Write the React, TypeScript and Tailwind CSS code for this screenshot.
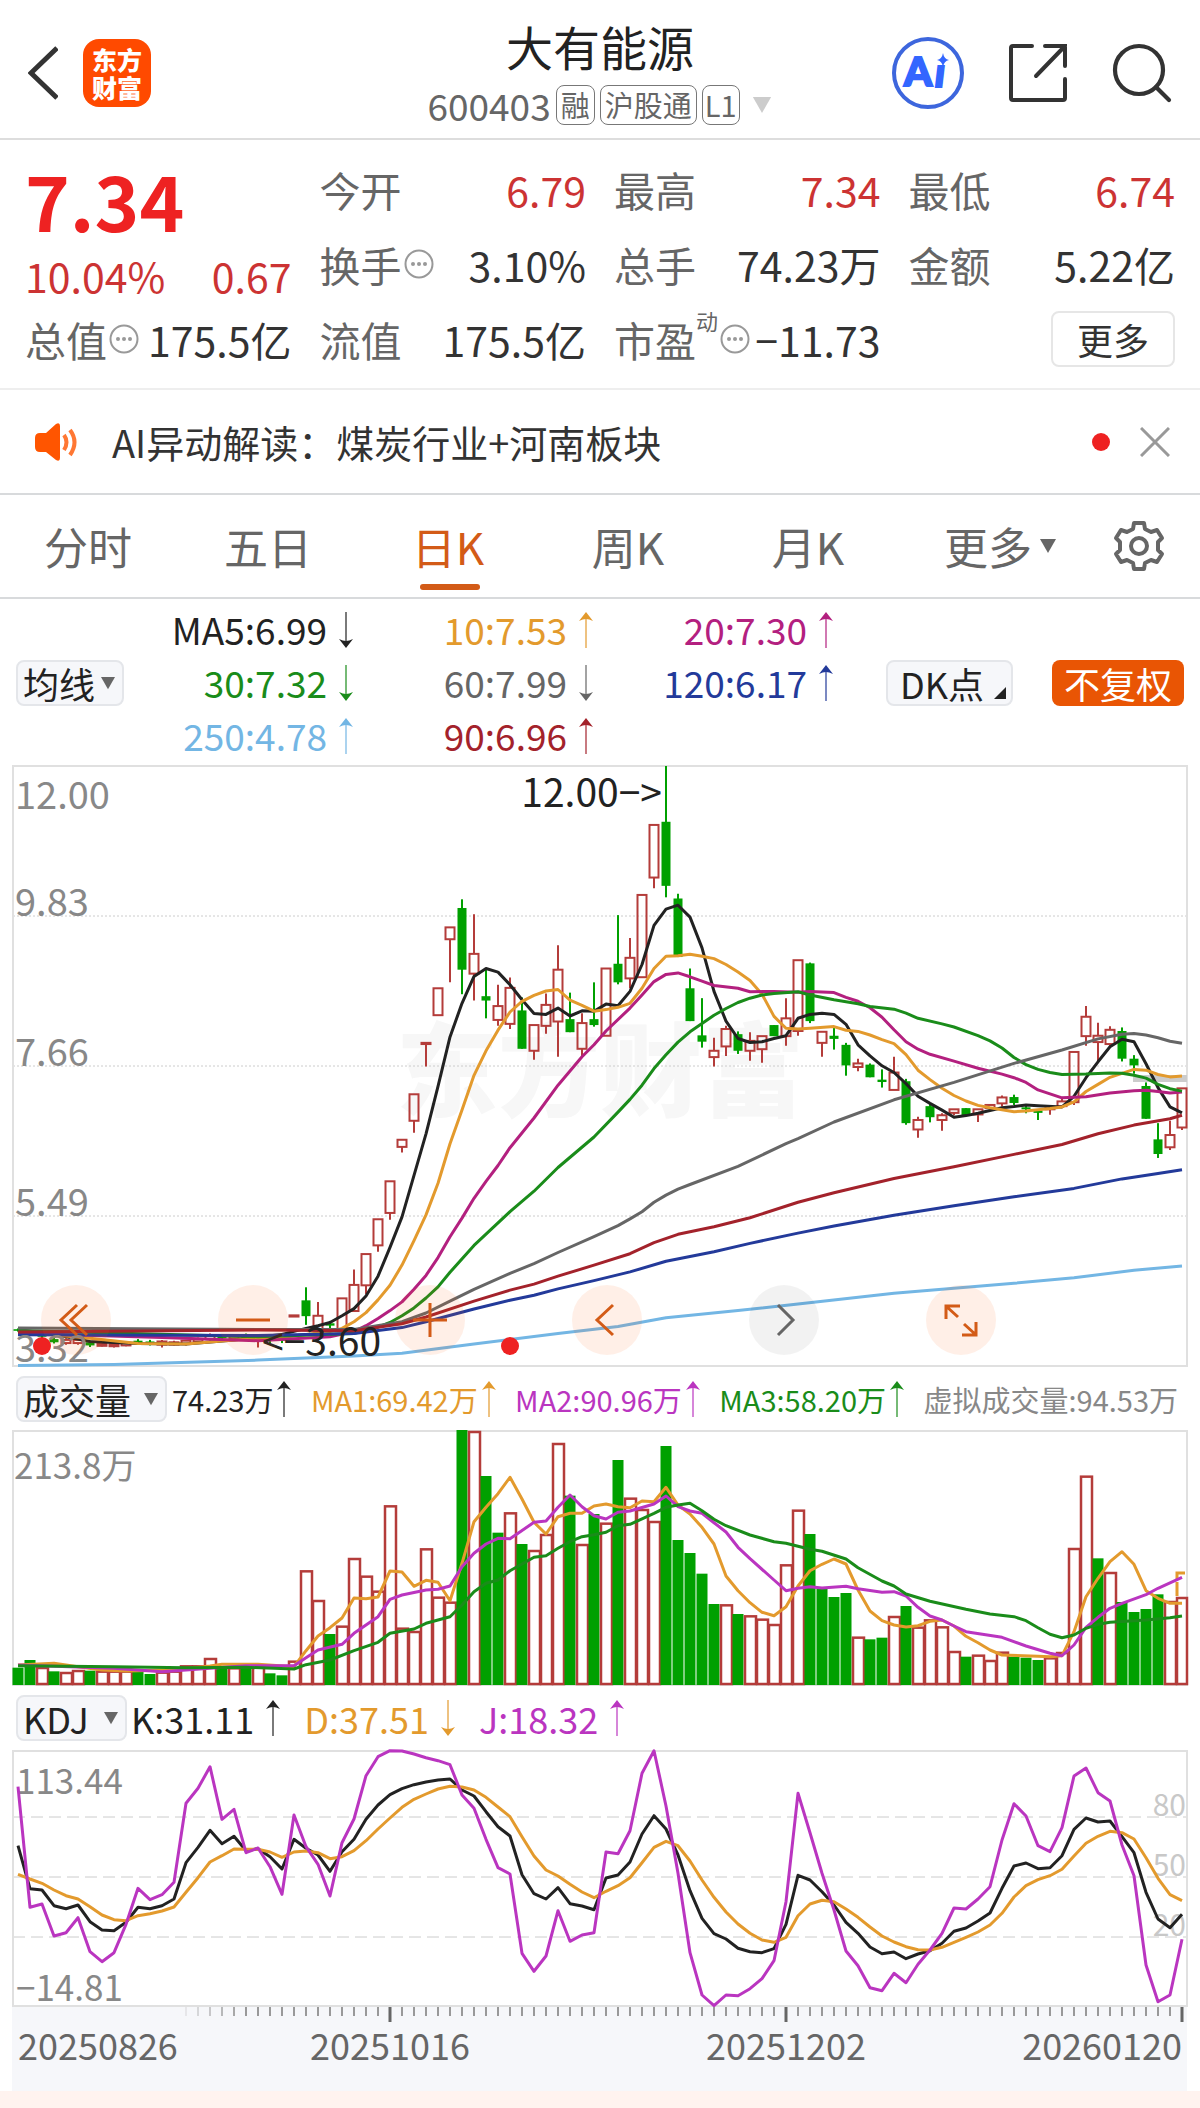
import { Search } from "lucide-react";
import { useState } from "react";
import type { ReactNode } from "react";

type Point = [number, number];
// kind, body top, body bottom, high, low
type Candle = ["r" | "g", number, number, number, number];
type Bar = ["r" | "g", number];

const UP = "#b43c3a";
const DOWN = "#00a000";

const xAt = (i: number) => 18 + 12 * i;
// raw readings of the three panels are scaled into their own view boxes
const priceY = (v: number) => ((v - 15) * 600) / 1517;
const volumeY = (v: number) => (v - 210) / 3;
const kdjY = (v: number) => (v - 60) / 3;

const CANDLES: Candle[] = [
	["g", 1439, 1443, 1437, 1445],
	["r", 1446, 1452, 1444, 1456],
	["g", 1450, 1458, 1448, 1462],
	["g", 1464, 1472, 1460, 1475],
	["r", 1466, 1474, 1462, 1478],
	["r", 1466, 1474, 1464, 1478],
	["g", 1472, 1480, 1468, 1484],
	["r", 1476, 1481, 1474, 1483],
	["r", 1477, 1482, 1474, 1485],
	["r", 1474, 1480, 1470, 1482],
	["g", 1468, 1476, 1464, 1478],
	["g", 1470, 1476, 1466, 1480],
	["r", 1470, 1478, 1466, 1485],
	["r", 1472, 1478, 1468, 1480],
	["r", 1468, 1476, 1466, 1480],
	["r", 1464, 1470, 1460, 1474],
	["r", 1456, 1464, 1450, 1468],
	["g", 1456, 1462, 1452, 1466],
	["r", 1456, 1462, 1452, 1466],
	["g", 1456, 1462, 1450, 1466],
	["r", 1460, 1468, 1456, 1485],
	["g", 1462, 1468, 1458, 1474],
	["g", 1460, 1468, 1456, 1474],
	["r", 1404, 1407, 1404, 1407],
	["g", 1366, 1406, 1333, 1428],
	["r", 1405, 1440, 1370, 1450],
	["g", 1424, 1430, 1418, 1438],
	["r", 1361, 1440, 1361, 1440],
	["r", 1327, 1393, 1288, 1393],
	["r", 1249, 1328, 1249, 1350],
	["r", 1161, 1227, 1161, 1243],
	["r", 1065, 1145, 1065, 1162],
	["r", 960, 978, 960, 992],
	["r", 845, 912, 845, 942],
	["r", 715, 718, 715, 775],
	["r", 577, 645, 577, 645],
	["r", 423, 453, 423, 562],
	["g", 374, 530, 352, 592],
	["r", 490, 540, 390, 608],
	["g", 597, 608, 530, 653],
	["r", 622, 657, 568, 672],
	["r", 576, 667, 550, 680],
	["g", 633, 730, 600, 730],
	["r", 670, 735, 670, 758],
	["r", 619, 672, 590, 692],
	["r", 530, 661, 468, 750],
	["g", 655, 688, 588, 688],
	["r", 665, 730, 640, 752],
	["g", 655, 670, 562, 674],
	["r", 527, 697, 527, 697],
	["g", 515, 562, 392, 567],
	["r", 500, 552, 450, 577],
	["r", 341, 549, 341, 549],
	["r", 164, 297, 164, 324],
	["g", 156, 318, 15, 347],
	["g", 350, 498, 338, 498],
	["g", 577, 660, 527, 660],
	["g", 696, 712, 602, 727],
	["r", 735, 751, 702, 775],
	["r", 680, 724, 672, 748],
	["g", 693, 735, 686, 743],
	["r", 710, 735, 688, 760],
	["r", 698, 731, 698, 765],
	["g", 670, 698, 670, 698],
	["r", 653, 698, 602, 722],
	["r", 506, 685, 506, 697],
	["g", 514, 660, 512, 665],
	["r", 687, 715, 687, 750],
	["g", 697, 705, 676, 732],
	["g", 720, 772, 715, 798],
	["r", 767, 776, 755, 787],
	["g", 770, 802, 767, 802],
	["g", 808, 814, 782, 828],
	["r", 790, 834, 750, 834],
	["g", 812, 918, 806, 922],
	["r", 910, 934, 902, 955],
	["g", 875, 903, 868, 916],
	["r", 898, 910, 893, 937],
	["r", 883, 892, 883, 898],
	["g", 880, 900, 880, 900],
	["r", 883, 896, 883, 915],
	["r", 872, 880, 872, 880],
	["r", 853, 868, 848, 876],
	["g", 852, 867, 846, 872],
	["g", 878, 883, 872, 893],
	["g", 886, 892, 884, 910],
	["r", 878, 883, 876, 897],
	["r", 863, 875, 855, 880],
	["r", 738, 865, 738, 872],
	["r", 649, 698, 622, 722],
	["r", 697, 713, 664, 765],
	["r", 682, 718, 673, 728],
	["g", 685, 755, 676, 762],
	["g", 755, 772, 746, 793],
	["g", 824, 907, 815, 907],
	["g", 959, 996, 918, 1006],
	["r", 948, 979, 912, 986],
	["r", 830, 929, 830, 935],
];

const MA5: Point[] = [
	[0, 1440], [3, 1452], [6, 1470], [10, 1475], [14, 1476], [18, 1466], [22, 1452], [24, 1437], [25, 1430], [26, 1422],
	[27, 1405], [28, 1387], [29, 1355], [30, 1305], [31, 1232], [32, 1155], [33, 1050], [34, 945], [35, 825], [36, 700],
	[37, 615], [38, 547], [39, 527], [40, 536], [41, 568], [42, 606], [43, 641], [44, 643], [45, 627], [46, 647],
	[47, 634], [48, 635], [49, 617], [50, 621], [51, 585], [52, 517], [53, 418], [54, 377], [55, 367], [56, 397],
	[57, 475], [58, 585], [59, 660], [60, 704], [61, 714], [62, 712], [63, 704], [64, 697], [65, 653], [66, 643],
	[67, 640], [68, 643], [69, 668], [70, 720], [71, 748], [72, 773], [73, 790], [74, 818], [75, 850], [76, 868],
	[77, 885], [78, 903], [79, 899], [80, 893], [81, 886], [82, 879], [83, 876], [84, 872], [85, 874], [87, 877],
	[88, 850], [89, 803], [90, 763], [91, 725], [92, 706], [93, 712], [94, 768], [95, 828], [96, 877], [97, 892],
];

const MA10: Point[] = [
	[0, 1445], [6, 1462], [10, 1475], [14, 1476], [18, 1466], [22, 1460], [26, 1445], [27, 1437], [28, 1420], [29, 1397],
	[30, 1365], [31, 1328], [32, 1277], [33, 1215], [34, 1150], [35, 1070], [36, 970], [37, 885], [38, 797], [39, 735],
	[40, 683], [41, 637], [42, 610], [43, 595], [44, 584], [45, 580], [46, 607], [47, 620], [48, 635], [49, 631],
	[50, 625], [51, 615], [52, 577], [53, 527], [54, 496], [55, 495], [56, 491], [57, 496], [58, 502], [59, 517],
	[60, 536], [61, 557], [62, 592], [63, 648], [64, 678], [65, 680], [66, 678], [68, 674], [69, 683], [70, 686],
	[71, 695], [72, 707], [73, 717], [74, 745], [75, 784], [76, 808], [77, 830], [78, 848], [79, 862], [80, 873],
	[81, 879], [82, 884], [83, 889], [84, 887], [86, 881], [87, 877], [88, 864], [89, 838], [90, 820], [91, 802],
	[92, 792], [93, 782], [94, 784], [95, 795], [96, 801], [97, 799],
];

const MA20: Point[] = [
	[0, 1449], [12, 1460], [20, 1468], [26, 1458], [28, 1445], [29, 1430], [30, 1412], [31, 1392], [32, 1370], [33, 1338],
	[34, 1303], [35, 1258], [36, 1205], [37, 1158], [38, 1108], [39, 1065], [40, 1025], [41, 980], [43, 905], [45, 822],
	[47, 750], [48, 720], [49, 685], [51, 627], [52, 594], [53, 560], [54, 542], [55, 538], [56, 548], [57, 559],
	[58, 570], [60, 577], [61, 586], [63, 585], [65, 587], [66, 585], [68, 588], [69, 600], [70, 610], [71, 626],
	[72, 650], [73, 682], [74, 712], [75, 731], [76, 744], [78, 761], [80, 779], [82, 794], [83, 803], [84, 815],
	[85, 834], [87, 854], [89, 851], [91, 842], [93, 836], [94, 835], [95, 838], [96, 842], [97, 839],
];

const MA30: Point[] = [
	[0, 1442], [20, 1458], [28, 1450], [29, 1441], [30, 1434], [31, 1422], [32, 1405], [33, 1385], [34, 1360], [35, 1332],
	[36, 1295], [38, 1227], [41, 1142], [43, 1090], [45, 1030], [48, 953], [50, 890], [51, 858], [52, 822], [53, 780],
	[54, 745], [55, 713], [56, 687], [58, 645], [59, 628], [60, 613], [61, 602], [62, 594], [63, 590], [65, 586],
	[66, 594], [68, 606], [70, 616], [71, 623], [73, 630], [74, 640], [75, 653], [77, 667], [78, 675], [80, 697],
	[81, 710], [82, 728], [83, 752], [84, 770], [85, 782], [86, 790], [87, 795], [89, 794], [91, 791], [92, 792],
	[93, 797], [94, 804], [95, 820], [96, 831], [97, 837],
];

const MA60: Point[] = [
	[0, 1436], [20, 1440], [28, 1440], [32, 1420], [34, 1398], [36, 1368], [38, 1338], [41, 1298], [43, 1273], [45, 1245],
	[48, 1205], [50, 1177], [51, 1160], [52, 1142], [53, 1118], [54, 1100], [55, 1085], [56, 1073], [60, 1027], [64, 970],
	[65, 957], [68, 915], [73, 859], [78, 815], [83, 767], [87, 733], [90, 705], [92, 693], [93, 691], [94, 695],
	[95, 702], [96, 711], [97, 716],
];

const MA90: Point[] = [
	[0, 1446], [20, 1441], [28, 1443], [32, 1425], [34, 1408], [38, 1368], [41, 1340], [43, 1325], [45, 1305], [48, 1277],
	[51, 1248], [53, 1220], [55, 1199], [58, 1180], [61, 1157], [65, 1118], [68, 1094], [73, 1058], [78, 1028], [83, 997],
	[87, 972], [90, 945], [93, 923], [96, 907], [97, 898],
];

const MA120: Point[] = [
	[0, 1453], [20, 1455], [28, 1450], [32, 1435], [34, 1420], [38, 1388], [41, 1366], [43, 1353], [45, 1337], [48, 1316],
	[51, 1294], [54, 1267], [58, 1243], [61, 1222], [65, 1196], [68, 1178], [73, 1151], [78, 1127], [83, 1104], [88, 1083],
	[92, 1059], [95, 1045], [97, 1036],
];

const MA250: Point[] = [
	[0, 1531], [8, 1528], [20, 1517], [28, 1507], [32, 1500], [38, 1476], [45, 1450], [50, 1432], [54, 1410], [60, 1392],
	[65, 1375], [73, 1348], [83, 1323], [88, 1309], [93, 1290], [97, 1279],
];

const VOLUMES: Bar[] = [
	["g", 923], ["g", 900], ["r", 921], ["g", 934], ["r", 936], ["r", 930], ["g", 932], ["r", 932], ["r", 932], ["r", 932],
	["g", 935], ["g", 942], ["r", 935], ["r", 932], ["r", 916], ["r", 916], ["r", 894], ["g", 920], ["r", 922], ["g", 922],
	["r", 920], ["g", 940], ["g", 946], ["r", 902], ["r", 631], ["r", 720], ["g", 822], ["r", 797], ["r", 594], ["r", 647],
	["r", 692], ["r", 436], ["r", 803], ["r", 813], ["r", 565], ["r", 710], ["r", 725], ["g", 210], ["r", 213], ["g", 348],
	["g", 518], ["r", 457], ["g", 552], ["r", 570], ["r", 522], ["r", 249], ["g", 407], ["r", 552], ["g", 462], ["r", 488],
	["g", 300], ["r", 413], ["r", 447], ["r", 483], ["g", 258], ["g", 540], ["g", 579], ["g", 641], ["g", 732], ["r", 733],
	["g", 762], ["r", 766], ["r", 776], ["r", 792], ["r", 613], ["r", 449], ["g", 522], ["g", 686], ["g", 711], ["g", 699],
	["r", 830], ["g", 838], ["g", 833], ["r", 768], ["g", 738], ["r", 800], ["r", 778], ["r", 799], ["r", 873], ["g", 890],
	["r", 884], ["r", 900], ["r", 875], ["g", 890], ["g", 893], ["g", 900], ["r", 892], ["r", 876], ["r", 564], ["r", 347],
	["g", 595], ["r", 636], ["g", 726], ["g", 756], ["g", 747], ["g", 703], ["r", 723], ["r", 711],
];

const VOL_MA1: Point[] = [
	[0, 915], [3, 910], [5, 920], [7, 930], [9, 933], [13, 930], [16, 918], [17, 913], [20, 913], [23, 920],
	[24, 872], [25, 828], [26, 803], [27, 774], [28, 714], [29, 716], [30, 711], [31, 633], [32, 636], [33, 679],
	[34, 661], [35, 667], [36, 722], [37, 610], [38, 485], [39, 442], [40, 401], [41, 352], [42, 417], [43, 487],
	[44, 522], [45, 470], [46, 460], [47, 460], [48, 438], [49, 432], [50, 440], [51, 443], [52, 423], [53, 425],
	[54, 382], [55, 435], [56, 462], [57, 502], [58, 552], [59, 648], [60, 692], [61, 728], [62, 757], [63, 767],
	[64, 740], [65, 678], [66, 632], [67, 613], [68, 597], [69, 612], [70, 690], [71, 753], [72, 782], [73, 795],
	[74, 801], [75, 797], [76, 784], [77, 780], [78, 798], [79, 829], [80, 848], [81, 870], [82, 885], [85, 889],
	[86, 890], [87, 887], [88, 815], [89, 710], [90, 655], [91, 605], [92, 575], [93, 613], [94, 692], [95, 715],
	[96, 730], [97, 730],
];

const VOL_MA2: Point[] = [
	[0, 915], [8, 925], [12, 935], [16, 925], [19, 917], [23, 917], [24, 893], [25, 870], [27, 853], [28, 820],
	[30, 770], [31, 718], [32, 705], [34, 690], [35, 688], [36, 678], [37, 620], [38, 580], [39, 552], [40, 535],
	[41, 536], [43, 487], [44, 483], [45, 442], [46, 405], [47, 440], [48, 467], [49, 477], [50, 457], [51, 453],
	[53, 432], [54, 408], [55, 440], [56, 453], [57, 460], [58, 488], [59, 516], [60, 562], [61, 596], [63, 660],
	[64, 692], [65, 685], [66, 680], [67, 684], [69, 679], [70, 686], [72, 697], [73, 695], [74, 708], [75, 742],
	[76, 768], [77, 780], [78, 798], [79, 815], [82, 832], [84, 858], [86, 880], [87, 887], [88, 855], [89, 802],
	[90, 772], [91, 745], [92, 730], [94, 704], [95, 685], [97, 652],
];

const VOL_MA3: Point[] = [
	[0, 917], [8, 920], [14, 923], [19, 922], [23, 927], [24, 914], [26, 900], [28, 872], [30, 847], [31, 820],
	[33, 807], [34, 790], [36, 770], [37, 735], [38, 695], [39, 670], [40, 660], [41, 632], [43, 592], [44, 587],
	[45, 565], [46, 545], [47, 530], [48, 524], [49, 517], [50, 497], [51, 493], [53, 460], [54, 442], [55, 435],
	[56, 430], [57, 452], [58, 478], [59, 497], [61, 525], [63, 545], [64, 550], [66, 568], [67, 574], [69, 597],
	[70, 623], [72, 663], [73, 678], [74, 702], [76, 724], [79, 748], [81, 762], [83, 770], [84, 782], [85, 803],
	[86, 823], [87, 833], [88, 825], [89, 805], [90, 793], [91, 787], [94, 780], [96, 773], [97, 768],
];

const K_VALUES = [
	347, 476, 480, 527, 536, 525, 575, 600, 602, 577, 532, 536, 527, 507, 398, 352, 301, 341, 319, 362,
	356, 380, 417, 328, 355, 375, 424, 365, 328, 268, 225, 194, 176, 164, 156, 150, 147, 180, 198, 245,
	290, 318, 434, 491, 507, 473, 521, 528, 539, 444, 435, 396, 312, 257, 297, 375, 482, 565, 611, 627,
	655, 665, 668, 656, 583, 436, 450, 485, 525, 577, 610, 651, 671, 666, 686, 672, 662, 640, 604, 594,
	573, 549, 475, 408, 399, 416, 413, 377, 298, 264, 276, 273, 320, 368, 487, 567, 593, 553,
];

const D_VALUES = [
	433, 447, 460, 480, 497, 507, 530, 555, 569, 572, 557, 551, 543, 531, 487, 443, 396, 377, 357, 358,
	358, 366, 382, 366, 363, 368, 386, 380, 362, 332, 297, 264, 232, 208, 192, 177, 169, 171, 180, 202,
	231, 260, 320, 378, 420, 438, 463, 486, 503, 484, 467, 443, 398, 352, 334, 347, 393, 450, 502, 546,
	582, 610, 630, 637, 622, 557, 522, 511, 515, 537, 562, 591, 618, 636, 650, 659, 660, 652, 637, 622,
	606, 585, 550, 501, 467, 449, 437, 418, 378, 340, 319, 304, 308, 327, 383, 445, 494, 512,
];

const J_VALUES = [
	170, 532, 522, 618, 608, 563, 665, 695, 668, 583, 475, 509, 494, 457, 220, 175, 110, 268, 238, 368,
	354, 410, 493, 255, 350, 403, 498, 338, 267, 137, 80, 62, 63, 72, 83, 92, 104, 195, 235, 328,
	413, 432, 670, 724, 678, 542, 634, 615, 608, 366, 371, 302, 130, 62, 228, 430, 668, 795, 827, 795,
	797, 776, 746, 692, 515, 190, 308, 430, 540, 663, 707, 773, 782, 730, 758, 703, 660, 610, 534, 537,
	507, 470, 330, 221, 258, 347, 365, 293, 138, 114, 188, 213, 345, 437, 705, 815, 795, 628,
];

const TABS = ["分时", "五日", "日K", "周K", "月K"];

const MA_LEGEND: { text: string; up: boolean; color: string }[] = [
	{ text: "MA5:6.99", up: false, color: "text-[#222222]" },
	{ text: "10:7.53", up: true, color: "text-[#e39a2d]" },
	{ text: "20:7.30", up: true, color: "text-[#b3207f]" },
	{ text: "30:7.32", up: false, color: "text-[#1a8c1a]" },
	{ text: "60:7.99", up: false, color: "text-[#666666]" },
	{ text: "120:6.17", up: true, color: "text-[#233a9a]" },
	{ text: "250:4.78", up: true, color: "text-[#73b6e4]" },
	{ text: "90:6.96", up: true, color: "text-[#a3222b]" },
];

function Line({
	points,
	y,
	color,
	width = 3,
}: {
	points: Point[];
	y: (v: number) => number;
	color: string;
	width?: number;
}) {
	return (
		<polyline
			points={points
				.map(([i, v]) => `${xAt(i)},${y(v).toFixed(1)}`)
				.join(" ")}
			fill="none"
			stroke={color}
			strokeWidth={width}
			strokeLinejoin="round"
		/>
	);
}

function Arrow({ up }: { up: boolean }) {
	return (
		<svg
			viewBox="0 0 14 36"
			className="w-[14px] h-9 shrink-0"
			fill="currentColor"
			aria-hidden="true"
		>
			<g transform={up ? undefined : "rotate(180 7 18)"}>
				<rect x="6" y="3" width="2" height="33" opacity="0.6" />
				<path d="M7 0 L14 9 Q10 7 7 7 Q4 7 0 9 Z" />
			</g>
		</svg>
	);
}

function Triangle({ className }: { className: string }) {
	return (
		<svg
			viewBox="0 0 16 14"
			className={className}
			fill="currentColor"
			aria-hidden="true"
		>
			<path d="M0 0 H16 L8 14 Z" />
		</svg>
	);
}

function IndicatorSelect({
	label,
	options,
	className,
}: {
	label: string;
	options: string[];
	className: string;
}) {
	return (
		<label className={`relative block shrink-0 h-[46px] ${className}`}>
			<select
				aria-label={label}
				className="block appearance-none w-full h-full pl-[5px] text-[36px] leading-[40px] text-[#222222] bg-[#f6f7fa] border-2 border-[#e4e6ea] rounded-lg"
			>
				{options.map((o) => (
					<option key={o}>{o}</option>
				))}
			</select>
			<Triangle className="absolute top-4 right-[9px] w-[14px] h-[14px] text-[#666666] pointer-events-none" />
		</label>
	);
}

function InfoIcon() {
	return (
		<svg
			viewBox="0 0 30 30"
			className="w-[30px] h-[30px] ml-[2px] shrink-0 text-[#999999]"
			aria-hidden="true"
		>
			<circle
				cx="15"
				cy="15"
				r="13.5"
				fill="none"
				stroke="currentColor"
				strokeWidth="2"
			/>
			<circle cx="9" cy="15" r="2" fill="currentColor" />
			<circle cx="15" cy="15" r="2" fill="currentColor" />
			<circle cx="21" cy="15" r="2" fill="currentColor" />
		</svg>
	);
}

function Quote({
	label,
	value,
	red,
	info,
	sup,
}: {
	label: string;
	value: string;
	red?: boolean;
	info?: boolean;
	sup?: string;
}) {
	return (
		<div className="flex items-center justify-between">
			<span className="flex items-center text-[#666666]">
				{label}
				{sup && (
					<sup className="self-start top-0 text-[22px] leading-none">
						{sup}
					</sup>
				)}
				{info && <InfoIcon />}
			</span>
			<span className={red ? "text-[#cc3333]" : "text-[#333333]"}>
				{value}
			</span>
		</div>
	);
}

function Header() {
	return (
		<header className="flex items-center justify-between h-[140px] px-7 border-b-2 border-[#dddddd]">
			<div className="flex items-center gap-[25px] w-[280px] pt-2">
				<button aria-label="返回" className="text-[#333333]">
					<svg
						viewBox="0 0 30 54"
						className="w-[30px] h-[54px]"
						fill="none"
						stroke="currentColor"
						strokeWidth="5"
					>
						<path d="M29 2 L3 27 L29 52" />
					</svg>
				</button>
				<a
					href="#home"
					className="flex items-center justify-center w-[68px] h-[68px] rounded-2xl bg-[#ff4a00] text-center text-white text-[25px] leading-7 font-black"
				>
					东方
					<br />
					财富
				</a>
			</div>

			<div className="flex flex-col items-center">
				<h1 className="text-[47px] leading-[64px] text-[#222222]">
					大有能源
				</h1>
				<div className="flex items-center gap-[5px] mt-[7px] text-[#666666]">
					<span className="text-[37px] leading-10">600403</span>
					<span className="h-10 px-1 text-[29px] leading-9 border border-[#777777] rounded-lg">
						融
					</span>
					<span className="h-10 px-1 text-[29px] leading-9 border border-[#777777] rounded-lg">
						沪股通
					</span>
					<span className="h-10 px-[2px] text-[29px] leading-9 border border-[#777777] rounded-lg">
						L1
					</span>
					<Triangle className="w-[22px] h-4 ml-[6px] text-[#cccccc]" />
				</div>
			</div>

			<div className="flex items-center justify-end gap-11 w-[280px] pt-2">
				<button aria-label="Ai">
					<svg viewBox="0 0 72 72" className="w-[72px] h-[72px]">
						<circle
							cx="36"
							cy="36"
							r="34"
							fill="none"
							stroke="#3d66dd"
							strokeWidth="4"
						/>
						<g
							fill="#3366ff"
							stroke="#3366ff"
							strokeWidth="2"
							fontFamily="Lato, sans-serif"
							fontWeight="900"
							fontSize="40"
						>
							<text x="12" y="49">
								A
							</text>
							<text x="43" y="50" fontStyle="italic">
								ı
							</text>
						</g>
						<path
							d="M51 16 Q52 22 57 23 Q52 24 51 30 Q50 24 45 23 Q50 22 51 16 Z"
							fill="#3366ff"
						/>
					</svg>
				</button>
				<button aria-label="分享" className="text-[#333333]">
					<svg
						viewBox="0 0 60 60"
						className="w-[60px] h-[60px]"
						fill="none"
						stroke="currentColor"
						strokeWidth="4"
					>
						<path
							d="M24 3 H5 Q3 3 3 5 V55 Q3 57 5 57 H55 Q57 57 57 55 V36"
							strokeLinecap="round"
						/>
						<path
							d="M37 3 H57 V23 M57 3 L28 33"
							strokeLinecap="round"
						/>
					</svg>
				</button>
				<button aria-label="搜索" className="text-[#333333]">
					<Search
						className="w-[72px] h-[72px] -m-[6px]"
						strokeWidth={1.4}
					/>
				</button>
			</div>
		</header>
	);
}

function QuotePanel() {
	return (
		<section className="grid grid-cols-4 auto-rows-[75px] gap-x-7 px-[25px] pt-[11px] pb-3 text-[41px] leading-[60px] border-b-2 border-[#eeeeee]">
			<div className="row-span-2 flex flex-col">
				<div className="h-[96px] text-[76px] leading-[96px] font-bold text-[#ee2222]">
					7.34
				</div>
				<div className="flex justify-between h-[56px] leading-[56px] text-[#cc3333]">
					<span>10.04%</span>
					<span>0.67</span>
				</div>
			</div>
			<Quote label="今开" value="6.79" red />
			<Quote label="最高" value="7.34" red />
			<Quote label="最低" value="6.74" red />
			<Quote label="换手" value="3.10%" info />
			<Quote label="总手" value="74.23万" />
			<Quote label="金额" value="5.22亿" />
			<Quote label="总值" value="175.5亿" info />
			<Quote label="流值" value="175.5亿" />
			<Quote label="市盈" value="−11.73" sup="动" info />
			<div className="flex items-center justify-end">
				<button className="w-[124px] h-[56px] text-[36px] leading-[50px] text-[#333333] border-2 border-[#e6e6e6] rounded-lg">
					更多
				</button>
			</div>
		</section>
	);
}

function Notice({ onClose }: { onClose: () => void }) {
	return (
		<section className="flex items-center h-[105px] pl-[34px] pr-[30px] border-b-2 border-[#d8dadc]">
			<svg
				viewBox="0 0 46 40"
				className="w-[46px] h-10 mr-8"
				aria-hidden="true"
			>
				<path
					d="M6 11 H12 L22 2 Q26 0 26 4 V36 Q26 40 22 38 L12 30 H6 Q1 30 1 25 V16 Q1 11 6 11 Z"
					fill="#ff5500"
				/>
				<path
					d="M30 13 Q35 20 30 28 M36 8 Q45 20 36 33"
					fill="none"
					stroke="#ff7733"
					strokeWidth="4"
				/>
			</svg>
			<a
				href="#notice"
				className="flex-1 text-[38px] leading-[56px] text-[#333333]"
			>
				AI异动解读：煤炭行业+河南板块
			</a>
			<span className="w-[18px] h-[18px] mr-[30px] rounded-full bg-[#ee2222]" />
			<button
				aria-label="关闭"
				onClick={onClose}
				className="text-[#999999]"
			>
				<svg
					viewBox="0 0 30 30"
					className="w-[30px] h-[30px]"
					stroke="currentColor"
					strokeWidth="3"
				>
					<path d="M1 1 L29 29 M29 1 L1 29" />
				</svg>
			</button>
		</section>
	);
}

function GearIcon() {
	return (
		<svg
			viewBox="0 0 52 52"
			className="w-[52px] h-[52px]"
			fill="none"
			stroke="currentColor"
			strokeWidth="4"
			strokeLinejoin="round"
			aria-hidden="true"
		>
			<path d="M21 3 H31 L32 9 L38 12 L44 10 L49 18 L45 22 V30 L49 34 L44 42 L38 40 L32 43 L31 49 H21 L20 43 L14 40 L8 42 L3 34 L7 30 V22 L3 18 L8 10 L14 12 L20 9 Z" />
			<circle cx="26" cy="26" r="8" />
		</svg>
	);
}

function PeriodTabs() {
	const [active, setActive] = useState("日K");

	return (
		<nav className="flex items-center h-[104px] text-[44px] leading-[60px] text-[#666666] border-b-2 border-[#d8dadc]">
			{TABS.map((tab) => (
				<button
					key={tab}
					onClick={() => setActive(tab)}
					className={`relative w-[15%] h-full pr-1 ${tab === active ? "text-[#d35b17]" : ""}`}
				>
					{tab}
					{tab === active && (
						<span className="absolute bottom-[7px] left-1/2 -translate-x-1/2 w-[60px] h-[6px] rounded-full bg-[#d35b17]" />
					)}
				</button>
			))}
			<button className="flex items-center justify-center gap-2 w-[17%] h-full pr-1">
				更多
				<Triangle className="w-[16px] h-[14px]" />
			</button>
			<button aria-label="设置" className="ml-[9px]">
				<GearIcon />
			</button>
		</nav>
	);
}

function MaLegend() {
	return (
		<section className="grid grid-cols-[10%_60%_30%] items-center h-[167px] text-[36px]">
			<div className="pl-4">
				<IndicatorSelect
					label="均线类型"
					options={["均线"]}
					className="w-[108px]"
				/>
			</div>
			<div className="grid grid-cols-3 auto-rows-[53px] items-center text-[37px]">
				{MA_LEGEND.map((m) => (
					<div
						key={m.text}
						className={`flex items-center justify-end gap-3 pr-[7px] leading-[53px] ${m.color}`}
					>
						{m.text}
						<Arrow up={m.up} />
					</div>
				))}
			</div>
			<div className="flex items-center justify-between pl-[46px] pr-4">
				<button className="flex items-center gap-[10px] w-[127px] h-[46px] pl-3 leading-[40px] text-[#222222] bg-[#f6f7fa] border-2 border-[#e4e6ea] rounded-lg">
					DK点
					<svg
						viewBox="0 0 12 12"
						className="w-3 h-3 mt-5 shrink-0"
						fill="currentColor"
						aria-hidden="true"
					>
						<path d="M12 0 V12 H0 Z" />
					</svg>
				</button>
				<button className="w-[132px] h-[46px] leading-[44px] text-white bg-[#e95504] rounded-lg">
					不复权
				</button>
			</div>
		</section>
	);
}

function ChartButton({
	label,
	gray,
	children,
}: {
	label: string;
	gray?: boolean;
	children: ReactNode;
}) {
	return (
		<button
			aria-label={label}
			className={`w-[70px] h-[70px] rounded-full ${gray ? "bg-black/5 text-[#666666]" : "bg-[#ff6010]/10 text-[#d35b17]"}`}
		>
			<svg
				viewBox="0 0 70 70"
				className="w-full h-full"
				fill="none"
				stroke="currentColor"
				strokeWidth="3"
			>
				{children}
			</svg>
		</button>
	);
}

function PriceChart() {
	return (
		<section className="relative">
			<svg
				viewBox="0 0 1200 601"
				className="block w-full overflow-visible"
			>
				<text
					x="396"
					y="343"
					fontSize="102"
					fontWeight="900"
					fill="#f7f7f7"
				>
					东方财富
				</text>
				{[150, 300, 450].map((y) => (
					<line
						key={y}
						x1="13"
						x2="1187"
						y1={y}
						y2={y}
						stroke="#cccccc"
						strokeDasharray="2 2"
					/>
				))}
				<rect
					x="13"
					y="0"
					width="1174"
					height="600"
					fill="none"
					stroke="#e0e0e0"
					strokeWidth="2"
				/>
				<rect x="1133" y="309" width="54" height="7" fill="#cccccc" />

				{CANDLES.map(([kind, top, bottom, high, low], i) => {
					const x = xAt(i);
					const y1 = priceY(top);
					const y2 = priceY(bottom);
					const h = Math.max(y2 - y1, 1);
					return kind === "g" ? (
						<g key={i} fill={DOWN}>
							<rect
								x={x - 1}
								y={priceY(high)}
								width="2"
								height={priceY(low) - priceY(high)}
							/>
							<rect x={x - 4.5} y={y1} width="9" height={h} />
						</g>
					) : (
						<g key={i} fill="none" stroke={UP} strokeWidth="2">
							<path
								d={`M${x} ${priceY(high)} V${y1} M${x} ${y2} V${priceY(low)}`}
							/>
							<rect x={x - 4.5} y={y1} width="9" height={h} />
						</g>
					);
				})}

				<Line points={MA250} y={priceY} color="#73b6e4" />
				<Line points={MA5} y={priceY} color="#222222" />
				<Line points={MA10} y={priceY} color="#e39a2d" />
				<Line points={MA20} y={priceY} color="#b3207f" />
				<Line points={MA30} y={priceY} color="#1a8c1a" />
				<Line points={MA60} y={priceY} color="#666666" />
				<Line points={MA120} y={priceY} color="#233a9a" />
				<Line points={MA90} y={priceY} color="#a3222b" />

				<g fontSize="38" fill="#888888">
					<text x="15" y="43">
						12.00
					</text>
					<text x="15" y="150">
						9.83
					</text>
					<text x="15" y="300">
						7.66
					</text>
					<text x="15" y="450">
						5.49
					</text>
					<text x="15" y="596">
						3.32
					</text>
				</g>
				<g fontSize="39" fill="#222222">
					<text x="662" y="41" textAnchor="end">
						12.00−&gt;
					</text>
					<text x="262" y="590">
						&lt;−3.60
					</text>
				</g>
			</svg>

			{/* zoom and pan controls float over the chart */}
			<div className="absolute inset-x-0 bottom-3 flex justify-between pl-[41px] pr-[204px]">
				<ChartButton label="最早">
					<path d="M36 20 L20 35 L36 50 M46 20 L30 35 L46 50" />
				</ChartButton>
				<ChartButton label="缩小">
					<path d="M18 35 H52" />
				</ChartButton>
				<ChartButton label="放大">
					<path d="M18 35 H52 M35 18 V52" strokeWidth="3" />
				</ChartButton>
				<ChartButton label="左移">
					<path d="M41 20 L25 35 L41 50" />
				</ChartButton>
				<ChartButton label="右移" gray>
					<path d="M29 20 L44 35 L29 50" />
				</ChartButton>
				<ChartButton label="全屏">
					<path d="M20 34 V21 H34 M21 22 L32 32 M36 50 H50 V37 M49 49 L38 39" />
				</ChartButton>
			</div>
			<span className="absolute bottom-3 left-[33px] w-[18px] h-[18px] rounded-full bg-[#ee2222]" />
			<span className="absolute bottom-3 left-[501px] w-[18px] h-[18px] rounded-full bg-[#ee2222]" />
		</section>
	);
}

function VolumePanel() {
	return (
		<section>
			<div className="flex items-center h-[63px] pl-4 pr-[22px] text-[29px] leading-[46px]">
				<IndicatorSelect
					label="副图指标一"
					options={["成交量"]}
					className="w-[151px] mr-[5px]"
				/>
				<div className="flex flex-1 items-center justify-between whitespace-nowrap">
					<span className="flex items-center gap-1 text-[#222222]">
						74.23万
						<Arrow up />
					</span>
					<span className="flex items-center gap-1 text-[#e39a2d]">
						MA1:69.42万
						<Arrow up />
					</span>
					<span className="flex items-center gap-1 text-[#ba35c0]">
						MA2:90.96万
						<Arrow up />
					</span>
					<span className="flex items-center gap-1 text-[#1a8c1a]">
						MA3:58.20万
						<Arrow up />
					</span>
					<span className="text-[#888888]">虚拟成交量:94.53万</span>
				</div>
			</div>
			<svg
				viewBox="0 0 1200 256"
				className="block w-full overflow-visible"
			>
				<rect
					x="13"
					y="1"
					width="1174"
					height="254"
					fill="none"
					stroke="#e0e0e0"
					strokeWidth="2"
				/>
				{VOLUMES.map(([kind, top], i) => {
					const y = volumeY(top);
					return kind === "g" ? (
						<rect
							key={i}
							x={xAt(i) - 5.5}
							y={y}
							width="11"
							height={255 - y}
							fill={DOWN}
						/>
					) : (
						<rect
							key={i}
							x={xAt(i) - 5}
							y={y + 1}
							width={i === 97 ? 10 : 11}
							height={253 - y}
							fill="#ffffff"
							stroke={UP}
							strokeWidth="2.5"
						/>
					);
				})}
				<path
					d="M1177 166 V143 H1187"
					fill="none"
					stroke="#e39a2d"
					strokeWidth="3"
					strokeDasharray="14 3"
				/>
				<Line points={VOL_MA1} y={volumeY} color="#e39a2d" />
				<Line points={VOL_MA2} y={volumeY} color="#ba35c0" />
				<Line points={VOL_MA3} y={volumeY} color="#1a8c1a" />
				<text x="14" y="49" fontSize="35" fill="#888888">
					213.8万
				</text>
			</svg>
		</section>
	);
}

function KdjPanel() {
	const toPoints = (values: number[]): Point[] =>
		values.map((v, i) => [i, v]);

	return (
		<section>
			<div className="flex items-center h-[64px] pl-4 text-[36px] leading-[46px]">
				<IndicatorSelect
					label="副图指标二"
					options={["KDJ"]}
					className="w-[111px] mr-1"
				/>
				<div className="flex items-center gap-6">
					<span className="flex items-center gap-3 text-[#222222]">
						K:31.11
						<Arrow up />
					</span>
					<span className="flex items-center gap-3 text-[#e39a2d]">
						D:37.51
						<Arrow up={false} />
					</span>
					<span className="flex items-center gap-3 text-[#ba35c0]">
						J:18.32
						<Arrow up />
					</span>
				</div>
			</div>
			<svg
				viewBox="0 0 1200 257"
				className="block w-full overflow-visible"
			>
				{[67, 127, 187].map((y) => (
					<line
						key={y}
						x1="13"
						x2="1187"
						y1={y}
						y2={y}
						stroke="#cccccc"
						strokeDasharray="12 6"
					/>
				))}
				<g fontSize="30" fill="#c8c8c8" textAnchor="end">
					<text x="1186" y="66">
						80
					</text>
					<text x="1186" y="126">
						50
					</text>
					<text x="1186" y="186">
						20
					</text>
				</g>
				<rect
					x="13"
					y="1"
					width="1174"
					height="255"
					fill="none"
					stroke="#e0e0e0"
					strokeWidth="2"
				/>
				<g fontSize="35" fill="#888888">
					<text x="16" y="44">
						113.44
					</text>
					<text x="16" y="251">
						−14.81
					</text>
				</g>
				<Line points={toPoints(K_VALUES)} y={kdjY} color="#222222" />
				<Line points={toPoints(D_VALUES)} y={kdjY} color="#e39a2d" />
				<Line points={toPoints(J_VALUES)} y={kdjY} color="#ba35c0" />
			</svg>
		</section>
	);
}

function DateAxis() {
	const ticks = Array.from({ length: 84 }, (_, n) => n + 14);

	return (
		<svg viewBox="0 0 1200 84" className="block w-full">
			<rect x="12" y="0" width="1175" height="84" fill="#f6f7fa" />
			{ticks.map((i) => {
				const major = i === 31 || i === 64 || i === 97;
				return (
					<line
						key={i}
						x1={xAt(i)}
						x2={xAt(i)}
						y1="0"
						y2={major ? 15 : 9}
						stroke={major ? "#666666" : "#999999"}
						strokeWidth={major ? 3 : 2}
						opacity={Math.min(1, (i - 13) / 6)}
					/>
				);
			})}
			<g fontSize="36" fill="#666666">
				<text x="18" y="53">
					20250826
				</text>
				<text x="390" y="53" textAnchor="middle">
					20251016
				</text>
				<text x="786" y="53" textAnchor="middle">
					20251202
				</text>
				<text x="1182" y="53" textAnchor="end">
					20260120
				</text>
			</g>
		</svg>
	);
}

export default function App() {
	const [showNotice, setShowNotice] = useState(true);

	return (
		<main className="w-full bg-white font-['Noto_Sans_CJK_SC',sans-serif]">
			<Header />
			<QuotePanel />
			{showNotice && <Notice onClose={() => setShowNotice(false)} />}
			<PeriodTabs />
			<MaLegend />
			<PriceChart />
			<VolumePanel />
			<KdjPanel />
			<DateAxis />
			<div className="h-[17px] bg-[#fff3ef]" />
		</main>
	);
}
